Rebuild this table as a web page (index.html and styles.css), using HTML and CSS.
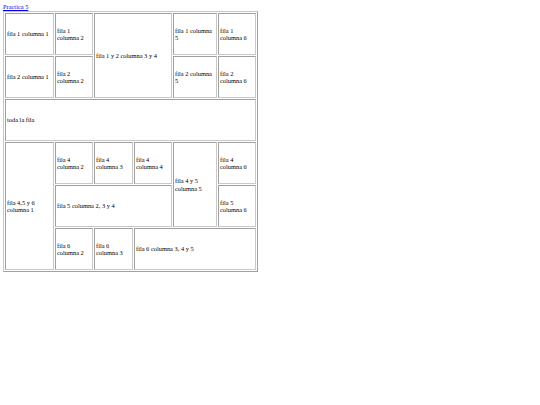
FILE: index.html
```html
<!DOCTYPE html>
<html>
<head>
<meta charset="utf-8">
<link rel="stylesheet" href="styles.css">
</head>
<body>
<a class="link" href="#">Practica 5</a>
<table class="grid">
<colgroup>
<col class="c1"><col class="c2"><col class="c3"><col class="c4"><col class="c5"><col class="c6">
</colgroup>
<tr>
<td>fila 1 columna 1</td>
<td>fila 1 columna 2</td>
<td colspan="2" rowspan="2">fila 1 y 2 columna 3 y 4</td>
<td>fila 1 columna 5</td>
<td>fila 1 columna 6</td>
</tr>
<tr>
<td>fila 2 columna 1</td>
<td>fila 2 columna 2</td>
<td>fila 2 columna 5</td>
<td>fila 2 columna 6</td>
</tr>
<tr>
<td colspan="6">toda la fila</td>
</tr>
<tr>
<td rowspan="3">fila 4,5 y 6 columna 1</td>
<td>fila 4 columna 2</td>
<td>fila 4 columna 3</td>
<td>fila 4 columna 4</td>
<td rowspan="2">fila 4 y 5 columna 5</td>
<td>fila 4 columna 6</td>
</tr>
<tr>
<td colspan="3">fila 5 columna 2, 3 y 4</td>
<td>fila 5 columna 6</td>
</tr>
<tr>
<td>fila 6 columna 2</td>
<td>fila 6 columna 3</td>
<td colspan="3">fila 6 columna 3, 4 y 5</td>
</tr>
</table>
</body>
</html>
```
FILE: styles.css
```css
body {
  margin: 3px;
  font-family: "Liberation Serif", serif;
  font-size: 6.4px;
  background: #fff;
  color: #000;
}
.link {
  color: #0000ee;
  text-decoration: underline;
  display: block;
  line-height: 8px;
}
.grid {
  width: 254px;
  table-layout: fixed;
  border-collapse: separate;
  border-spacing: 1px;
  border: 1px solid #a0a0a0;
  border-color: #c8c8c8 #a0a0a0 #a0a0a0 #c8c8c8;
  font-size: 6.4px;
}
.grid td {
  height: 40px;
  padding: 0 1px;
  border: 1px solid #a0a0a0;
  border-color: #a0a0a0 #c8c8c8 #c8c8c8 #a0a0a0;
  vertical-align: middle;
  line-height: 7.4px;
}
.c1 { width: 49px; }
.c2 { width: 38px; }
.c3 { width: 39px; }
.c4 { width: 38px; }
.c5 { width: 44px; }
.c6 { width: 38px; }
```
